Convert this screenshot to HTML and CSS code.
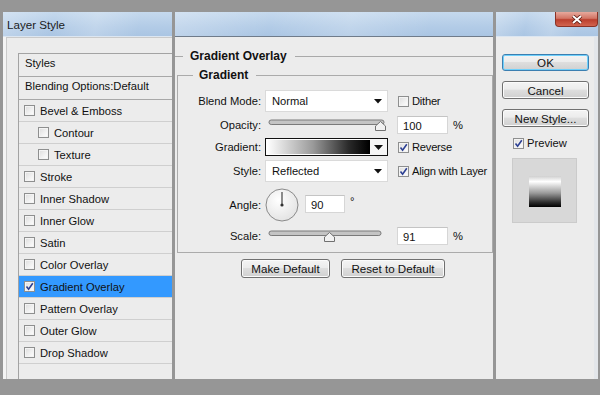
FILE: index.html
```html
<!DOCTYPE html>
<html lang="en">
<head>
    <meta charset="UTF-8">
    <meta name="viewport" content="width=device-width, initial-scale=1.0">
    <title>Layer Style</title>
    <link rel="stylesheet" href="styles.css">
</head>
<body>
  <div class="screen">

    <!-- left: styles list -->
    <section class="panel panel-left">
      <div class="titlebar"><span class="title">Layer Style</span></div>
      <div class="pane pane-left">
        <ul class="styles-list">
          <li class="list-head">Styles</li>
          <li class="list-head">Blending Options:Default</li>
          <li><span class="cb"></span>Bevel &amp; Emboss</li>
          <li class="sub"><span class="cb"></span>Contour</li>
          <li class="sub"><span class="cb"></span>Texture</li>
          <li><span class="cb"></span>Stroke</li>
          <li><span class="cb"></span>Inner Shadow</li>
          <li><span class="cb"></span>Inner Glow</li>
          <li><span class="cb"></span>Satin</li>
          <li><span class="cb"></span>Color Overlay</li>
          <li class="active"><span class="cb checked"><svg width="9" height="9" viewBox="0 0 9 9"><path d="M1.5 4.5 L3.6 7.2 L7.8 1.2" fill="none" stroke="#2b3f93" stroke-width="1.6"/></svg></span>Gradient Overlay</li>
          <li><span class="cb"></span>Pattern Overlay</li>
          <li><span class="cb"></span>Outer Glow</li>
          <li><span class="cb"></span>Drop Shadow</li>
        </ul>
      </div>
    </section>

    <!-- middle: gradient overlay settings -->
    <section class="panel panel-mid">
      <div class="titlebar titlebar-mid"></div>
      <div class="pane">
        <div class="group-title"><span>Gradient Overlay</span></div>
        <fieldset class="group">
          <legend>Gradient</legend>

          <div class="row row-select">
            <span class="lbl">Blend Mode:</span>
            <div class="select"><span>Normal</span><svg width="8" height="5" viewBox="0 0 8 5"><path d="M0 0 H8 L4 4.5 Z" fill="#111"/></svg></div>
            <label class="check"><span class="cb"></span>Dither</label>
          </div>

          <div class="row row-slim gap4">
            <span class="lbl">Opacity:</span>
            <svg class="slider" width="123" height="14" viewBox="0 0 123 14">
              <rect x="4" y="2" width="115" height="4.5" rx="2.2" fill="#c4c4c4" stroke="#7a7a7a"/>
              <path d="M110.5 12.5 V8 L115.5 3.5 L120.5 8 V12.5 Z" fill="#f1f1f1" stroke="#707070"/>
            </svg>
            <input class="num" type="text" value="100">
            <span class="unit">%</span>
          </div>

          <div class="row row-slim gap4">
            <span class="lbl">Gradient:</span>
            <div class="grad">
              <div class="grad-bar"></div>
              <div class="grad-arrow"><svg width="9" height="5" viewBox="0 0 9 5"><path d="M0 0 H9 L4.5 5 Z" fill="#111"/></svg></div>
            </div>
            <label class="check"><span class="cb checked"><svg width="9" height="9" viewBox="0 0 9 9"><path d="M1.5 4.5 L3.6 7.2 L7.8 1.2" fill="none" stroke="#2b3f93" stroke-width="1.6"/></svg></span>Reverse</label>
          </div>

          <div class="row row-select gap4">
            <span class="lbl">Style:</span>
            <div class="select"><span>Reflected</span><svg width="8" height="5" viewBox="0 0 8 5"><path d="M0 0 H8 L4 4.5 Z" fill="#111"/></svg></div>
            <label class="check"><span class="cb checked"><svg width="9" height="9" viewBox="0 0 9 9"><path d="M1.5 4.5 L3.6 7.2 L7.8 1.2" fill="none" stroke="#2b3f93" stroke-width="1.6"/></svg></span>Align with Layer</label>
          </div>

          <div class="row row-dial">
            <span class="lbl">Angle:</span>
            <svg class="dial" width="34" height="34" viewBox="0 0 34 34">
              <defs>
                <radialGradient id="dialFill" cx="0.4" cy="0.35" r="0.7">
                  <stop offset="0" stop-color="#ffffff"/>
                  <stop offset="1" stop-color="#e2e2e2"/>
                </radialGradient>
              </defs>
              <circle cx="17" cy="17" r="16" fill="url(#dialFill)" stroke="#8a8a8a"/>
              <line x1="17" y1="17" x2="17" y2="4" stroke="#444" stroke-width="1.2"/>
              <circle cx="17" cy="17" r="1.6" fill="#333"/>
            </svg>
            <input class="num num-angle" type="text" value="90">
            <span class="deg">°</span>
          </div>

          <div class="row row-slim row-scale">
            <span class="lbl">Scale:</span>
            <svg class="slider" width="123" height="14" viewBox="0 0 123 14">
              <rect x="4" y="2" width="112" height="4.5" rx="2.2" fill="#c4c4c4" stroke="#7a7a7a"/>
              <path d="M59.5 12.5 V8 L64.5 3.5 L69.5 8 V12.5 Z" fill="#f1f1f1" stroke="#707070"/>
            </svg>
            <input class="num" type="text" value="91">
            <span class="unit">%</span>
          </div>
        </fieldset>

        <div class="defaults">
          <button class="btn btn-make">Make Default</button>
          <button class="btn btn-reset">Reset to Default</button>
        </div>
      </div>
    </section>

    <!-- right: actions + preview -->
    <section class="panel panel-right">
      <div class="titlebar">
        <span class="close"><svg width="12" height="9" viewBox="0 0 12 9"><path d="M2 1 L10 8 M10 1 L2 8" stroke="#5a1a12" stroke-width="3.6"/><path d="M2 1 L10 8 M10 1 L2 8" stroke="#fff" stroke-width="2"/></svg></span>
      </div>
      <div class="pane pane-right">
        <div class="actions">
          <button class="btn btn-ok">OK</button>
          <button class="btn btn-side">Cancel</button>
          <button class="btn btn-side">New Style...</button>
        </div>
        <label class="check preview-check"><span class="cb checked"><svg width="9" height="9" viewBox="0 0 9 9"><path d="M1.5 4.5 L3.6 7.2 L7.8 1.2" fill="none" stroke="#2b3f93" stroke-width="1.6"/></svg></span>Preview</label>
        <div class="preview">
          <div class="swatch"></div>
        </div>
      </div>
    </section>

  </div>
</body>
</html>
```

FILE: styles.css
```css
body {
    margin: 0;
    background-color: #969696;
    font-family: "Liberation Sans", Arial, sans-serif;
    font-size: 11.2px;
    color: #111;
}
.screen {
    display: flex;
    gap: 3px;
    height: 395px;
    box-sizing: border-box;
    padding: 12px 2px 16px 3px;
}
.panel {
    display: flex;
    flex-direction: column;
    background-color: #ececec;
}
.panel-left { width: 169px; }
.panel-mid { width: 318px; }
.panel-right { width: 102px; }

.titlebar {
    height: 24px;
    flex: none;
    display: flex;
    align-items: center;
    background: linear-gradient(100deg, rgba(255,255,255,0.25) 0%, rgba(255,255,255,0) 30%, rgba(255,255,255,0.2) 55%, rgba(255,255,255,0) 80%),
                linear-gradient(180deg, #c5d9ee 0%, #b3cce7 60%, #aac5e3 100%);
    border-bottom: 1px solid #dce6f1;
}
.titlebar-mid {
    border-bottom-color: #6f7b8a;
}
.title {
    padding-left: 4px;
    font-size: 11.6px;
    color: #1b1b1b;
}
.close {
    margin-left: auto;
    align-self: flex-start;
    width: 43px;
    height: 15px;
    box-sizing: border-box;
    display: flex;
    align-items: center;
    justify-content: center;
    border: 1px solid #8a3226;
    border-top: none;
    border-radius: 0 0 4px 4px;
    background: linear-gradient(180deg, #e7a99d 0%, #d27565 45%, #bb3f2e 55%, #d2644f 100%);
}

.pane {
    flex: 1;
    min-height: 0;
    overflow: hidden;
}

/* ---- left list ---- */
.pane-left {
    border-left: 3px solid #f4f4f4;
    box-shadow: inset 1px 1px 0 #cacaca;
}
.styles-list {
    list-style: none;
    margin: 16px 0 0 12px;
    padding: 0;
    height: 100%;
    border-left: 1px solid #a3a3a3;
    border-top: 1px solid #a3a3a3;
}
.styles-list li {
    height: 21px;
    display: flex;
    align-items: center;
    padding-left: 5px;
    border-bottom: 1px solid #cfcfcf;
    white-space: nowrap;
}
.styles-list li.list-head {
    height: 22px;
    padding-left: 6px;
    align-items: flex-start;
    line-height: 19px;
    border-bottom-color: #a8a8a8;
}
.styles-list li.sub {
    padding-left: 19px;
}
.styles-list li.active {
    background-color: #3399ff;
}

.cb {
    width: 11px;
    height: 11px;
    box-sizing: border-box;
    flex: none;
    display: inline-flex;
    align-items: center;
    justify-content: center;
    margin-right: 5px;
    border: 1px solid #8e8f8f;
    background: linear-gradient(135deg, #dcdcdc 0%, #f2f2f2 60%, #ffffff 100%);
    box-shadow: inset 0 0 0 1px #f4f4f4;
}
.cb svg {
    display: block;
}

/* ---- middle settings ---- */
.group-title {
    display: flex;
    align-items: center;
    margin-top: 12px;
    font-weight: bold;
    font-size: 12px;
}
.group-title::before,
.group-title::after {
    content: "";
    height: 1px;
    background-color: #a9a9a9;
}
.group-title::before { width: 8px; }
.group-title::after { flex: 1; }
.group-title span {
    margin: 0 8px 0 7px;
}
.group {
    margin: 5px 0 0 2px;
    padding: 8px 0 7px 0;
    border: 1px solid #ababab;
    min-width: 0;
}
.group legend {
    margin-left: 15px;
    padding: 0 8px 0 6px;
    font-weight: bold;
    font-size: 12px;
}
.row {
    display: flex;
    align-items: center;
}
.row-select { height: 22px; }
.row-slim { height: 18px; }
.row-dial { height: 34px; margin-top: 6px; }
.row-scale { margin-top: 5px; }
.gap4 { margin-top: 4px; }
.lbl {
    width: 83px;
    margin-right: 4px;
    flex: none;
    text-align: right;
}
.select {
    width: 123px;
    height: 22px;
    box-sizing: border-box;
    display: flex;
    align-items: center;
    justify-content: space-between;
    padding: 0 5px 0 6px;
    background-color: #fff;
    border: 1px solid #dadada;
}
.check {
    display: flex;
    align-items: center;
    margin-left: 10px;
    white-space: nowrap;
    letter-spacing: -0.25px;
}
.check .cb {
    margin-right: 3px;
}
.slider {
    display: block;
    flex: none;
}
.num {
    width: 51px;
    height: 18px;
    box-sizing: border-box;
    margin: 0 0 0 9px;
    padding: 1px 0 0 5px;
    border: 1px solid #d6d6d6;
    border-top-color: #c4c4c4;
    background-color: #fff;
    font: inherit;
    color: #111;
}
.num-angle {
    width: 40px;
    margin-left: 6px;
    margin-top: -2px;
}
.unit {
    margin-left: 5px;
}
.deg {
    margin-left: 5px;
    margin-top: -8px;
}
.grad {
    width: 123px;
    height: 18px;
    box-sizing: border-box;
    display: flex;
    border: 1px solid #111;
    background-color: #fff;
}
.grad-bar {
    flex: 1;
    margin: 1px 0 1px 1px;
    background: linear-gradient(90deg, #ffffff 0%, #9a9a9a 45%, #2a2a2a 80%, #000 100%);
    border-right: 1px solid #000;
}
.grad-arrow {
    width: 17px;
    display: flex;
    align-items: center;
    justify-content: center;
    background-color: #f6f6f6;
}
.defaults {
    display: flex;
    margin: 6px 0 0 66px;
    gap: 11px;
}
.btn {
    height: 19px;
    padding: 0;
    box-sizing: border-box;
    border: 1px solid #707070;
    border-radius: 3px;
    background: linear-gradient(180deg, #f4f4f4 0%, #ececec 45%, #dedede 50%, #d0d0d0 100%);
    box-shadow: inset 0 0 0 1px #fbfbfb;
    font: inherit;
    font-size: 11.6px;
    color: #111;
}
.btn-make { width: 89px; }
.btn-reset { width: 104px; }

/* ---- right column ---- */
.pane-right {
    padding: 17px 0 0 6px;
    border-right: 4px solid #e3e6ea;
}
.actions {
    display: flex;
    flex-direction: column;
    gap: 10px;
}
.actions .btn {
    width: 87px;
    height: 18px;
}
.actions .btn-ok {
    height: 17px;
    border-color: #3c7fb1;
    box-shadow: inset 0 0 0 1px #6fd0fb;
}
.preview-check {
    margin: 10px 0 0 11px;
    letter-spacing: 0;
}
.preview {
    width: 65px;
    height: 65px;
    box-sizing: border-box;
    margin: 9px 0 0 10px;
    display: flex;
    align-items: center;
    justify-content: center;
    background-color: #d8d8d8;
    border: 1px solid #cbcbcb;
}
.swatch {
    width: 32px;
    height: 31px;
    margin-top: 2px;
    background: linear-gradient(180deg, #cfcfcf 0%, #ffffff 18%, #9a9a9a 55%, #2c2c2c 85%, #000 100%);
}
```
